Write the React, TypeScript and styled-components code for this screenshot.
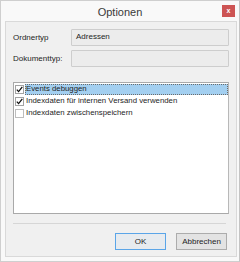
import React from 'react'
import styled, {createGlobalStyle} from 'styled-components'

const GlobalStyle = createGlobalStyle`
    html, body {
        margin: 0;
        padding: 0;
        background: #ffffff;
    }
    * {
        box-sizing: border-box;
    }
`;

const Window = styled.div`
    width: 240px;
    height: 262px;
    border: 1px solid #cfcfcf;
    border-right-color: #c4c4c4;
    background: #f9f9f9;
    display: flex;
    flex-direction: column;
    font-family: "Liberation Sans", Arial, sans-serif;
    font-size: 8px;
    color: #1e1e1e;
`;

const TitleBar = styled.div`
    height: 20px;
    display: grid;
    grid-template-columns: 1fr auto 1fr;
    align-items: start;
`;

const Title = styled.div`
    grid-column: 2;
    font-size: 11px;
    line-height: 20px;
    color: #3a3a3a;
    padding-top: 1px;
`;

const CloseButton = styled.div`
    grid-column: 3;
    justify-self: end;
    width: 13px;
    height: 12px;
    margin-top: 4px;
    margin-right: 4px;
    background: #cd5454;
    color: #ffffff;
    font-size: 7px;
    font-weight: 700;
    line-height: 11px;
    text-align: center;
`;

const Panel = styled.div`
    flex: 1;
    margin: 0 2px 4px 4px;
    background: #f0f0f0;
    border: 1px solid #d9d9d9;
    padding: 7px 7px 6px 7px;
    display: flex;
    flex-direction: column;
`;

const FieldRow = styled.div<{ $gap?: number }>`
    display: flex;
    align-items: center;
    margin-top: ${(p) => p.$gap ?? 0}px;
`;

const Label = styled.div`
    width: 58px;
    flex-shrink: 0;
`;

const Field = styled.div`
    flex: 1;
    height: 17px;
    background: #ececec;
    border: 1px solid #cdcdcd;
    border-radius: 1px;
    padding-left: 4px;
    line-height: 14px;
`;

const ListBox = styled.div`
    margin-top: 15px;
    height: 132px;
    background: #ffffff;
    border: 1px solid #a9a9a9;
    border-right-color: #b8b8b8;
    display: flex;
    flex-direction: column;
    font-size: 7.8px;
`;

const ListItem = styled.div`
    height: 12px;
    display: flex;
    align-items: center;
`;

const CheckBox = styled.span<{ $checked?: boolean }>`
    width: 9px;
    height: 9px;
    margin-left: 1px;
    margin-right: 1px;
    border: 1px solid ${(p) => (p.$checked ? '#a3a3a3' : '#bdbdbd')};
    background: #ffffff;
    display: flex;
    align-items: center;
    justify-content: center;
    flex-shrink: 0;
`;

const ItemText = styled.span<{ $selected?: boolean }>`
    flex: 1;
    height: 11px;
    line-height: 10px;
    padding-left: 1px;
    background: ${(p) => (p.$selected ? '#a3cff0' : 'transparent')};
    outline: ${(p) => (p.$selected ? '1px dotted #6b6b6b' : 'none')};
    outline-offset: -1px;
`;

const Separator = styled.div`
    margin: 9px 3px 0 0;
    height: 1px;
    background: #d6d6d6;
`;

const ButtonRow = styled.div`
    margin-top: 9px;
    display: flex;
    justify-content: flex-end;
    gap: 10px;
    padding-right: 2px;
`;

const Button = styled.button<{ $default?: boolean }>`
    width: 51px;
    height: 17px;
    padding: 0;
    font-family: inherit;
    font-size: 8px;
    color: #1e1e1e;
    background: ${(p) => (p.$default ? '#e7ebef' : '#e3e3e3')};
    border: 1px solid ${(p) => (p.$default ? '#5aa5e8' : '#acacac')};
    border-radius: 0;
`;

const Check = () => (
    <svg width="7" height="7" viewBox="0 0 7 7">
        <path d="M0.8 3.6 L2.6 5.6 L6.3 0.9" fill="none" stroke="#111" strokeWidth="1.3"/>
    </svg>
);

const items = [
    {text: 'Events debuggen', checked: true, selected: true},
    {text: 'Indexdaten für internen Versand verwenden', checked: true},
    {text: 'Indexdaten zwischenspeichern', checked: false},
];

export default function App(): JSX.Element {
    return <>
        <GlobalStyle/>
        <Window>
            <TitleBar>
                <Title>Optionen</Title>
                <CloseButton>x</CloseButton>
            </TitleBar>
            <Panel>
                <FieldRow>
                    <Label>Ordnertyp</Label>
                    <Field>Adressen</Field>
                </FieldRow>
                <FieldRow $gap={4}>
                    <Label>Dokumenttyp:</Label>
                    <Field/>
                </FieldRow>
                <ListBox>
                    {items.map((item) => (
                        <ListItem key={item.text}>
                            <CheckBox $checked={item.checked}>{item.checked && <Check/>}</CheckBox>
                            <ItemText $selected={item.selected}>{item.text}</ItemText>
                        </ListItem>
                    ))}
                </ListBox>
                <Separator/>
                <ButtonRow>
                    <Button $default>OK</Button>
                    <Button>Abbrechen</Button>
                </ButtonRow>
            </Panel>
        </Window>
    </>
}
